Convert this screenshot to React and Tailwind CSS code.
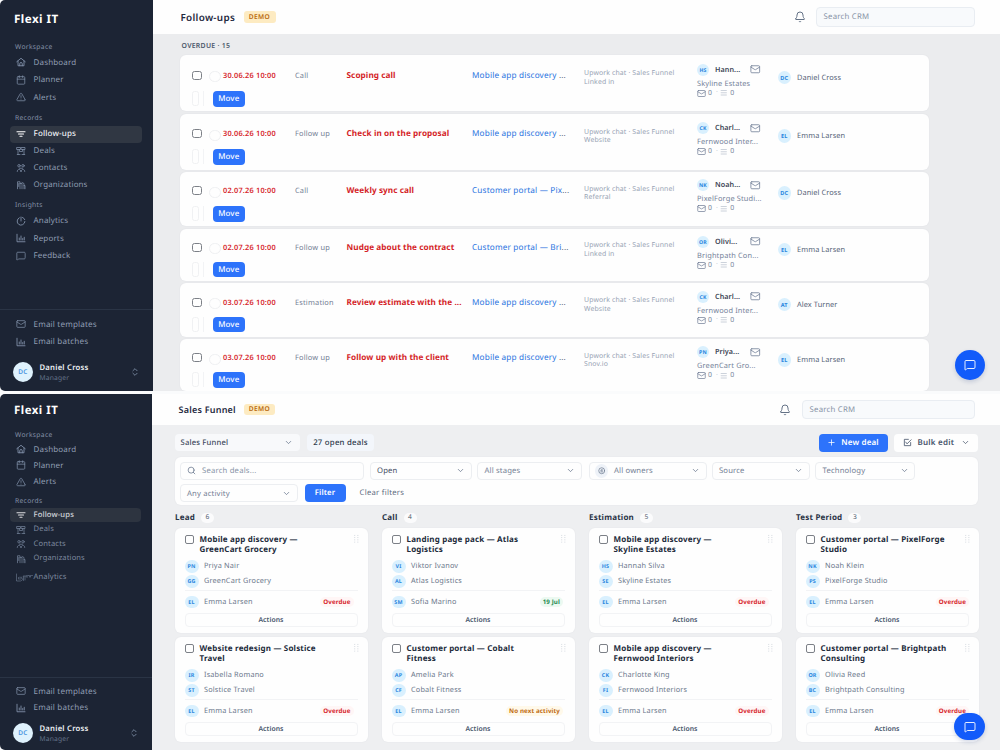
import {
    Bell, Calendar, ChevronDown, ChevronsUpDown, Mail, MessageSquare, Plus, Search, TriangleAlert,
} from "lucide-react";

const FONT = "font-['Noto_Sans','Open_Sans',sans-serif] [text-rendering:geometricPrecision] [&_button]:[text-rendering:inherit]";

function Svg({ className, children, box = "0 0 20 20", sw = 1.8 }) {
    return (
        <svg viewBox={box} className={className} fill="none" stroke="currentColor" strokeWidth={sw} strokeLinecap="round" strokeLinejoin="round">
            {children}
        </svg>
    );
}

const HomeIcon = ({ className }) => (
    <Svg className={className}><path d="M1.5 9.5 10 2.5l8.500 7M4 8v9.5h12V8M7.5 17.5v-4a2.5 2.5 0 0 1 5 0v4" /></Svg>
);
const FollowIcon = ({ className }) => (
    <Svg className={className} sw={2.4}><path d="M2 5.500h16M5 10h10M8 14.500h4" /></Svg>
);
const DealsIcon = ({ className }) => (
    <Svg className={className} sw={1.5}><path d="M2 3h7v4H2zM11 3h7v4h-7zM4 7v10M2.500 17h5.500M7 7v4h6V7M16 7v10M12 17h5.500" /></Svg>
);
const ContactsIcon = ({ className }) => (
    <Svg className={className} sw={1.5}><circle cx="6" cy="5.5" r="2.5" /><circle cx="14" cy="5.5" r="2.5" /><path d="M2.5 17c0-6 7-6 7 0M10.500 17c0-6 7-6 7 0M7 10.500h6" /></Svg>
);
const OrgIcon = ({ className }) => (
    <Svg className={className} sw={1.5}><path d="M3 17.500V3.500h5v14M8 7h4v10.500M12 5l4 2v10.500M5.500 7v6M16 11h2v6.500" /></Svg>
);
const PieIcon = ({ className }) => (
    <Svg className={className}><path d="M6.500 3.500a7.800 7.800 0 1 0 11.300 7.500M10 10V2M13 2.800a8 8 0 0 1 4.500 4.500" /></Svg>
);
const ReportIcon = ({ className }) => (
    <Svg className={className}><path d="M2 2.500v15h16M6.500 14v-4M10 14V6M13.500 14v-3M16.500 14V8.500" /></Svg>
);
// chart with the collapsed group label running out of its right side
const CollapsedIcon = () => (
    <Svg className="h-[9px] w-[17px] shrink-0" box="0 0 34 18" sw={1.2}>
        <path d="M1 2v14h8M5 12v-3M8 13V8M12 8c-3 0-2 3 0 3s2 4-1 4M15 15V7M18 7v7M15 6h7M22 5v4M24 5h3v3M29 5v3M31 5h2" />
    </Svg>
);

function NavItem({ icon: Icon, label, active, rowClass, textClass = "text-[8px]" }) {
    return (
        <div className={`ml-[9.500px] mr-[11.500px] flex items-center rounded-[4px] pl-[6px] ${rowClass} ${active ? "bg-[#303743] text-[#eef1f5]" : "text-[#8f9db2]"}`}>
            <span className="flex w-[18px] shrink-0 items-center text-[#8090a8]">
                <Icon className={`size-[10px] ${active ? "text-white" : ""}`} strokeWidth={1.8} />
            </span>
            <span className={`pt-[1.200px] tracking-[0.02em] ${textClass} ${active ? "font-medium" : ""}`}>{label}</span>
        </div>
    );
}

const SectionLabel = ({ children, className }) => (
    <div className={`flex h-3 items-center pl-[15px] pt-[1px] text-[6.700px] tracking-[0.050em] text-[#8592a8] ${className}`}>{children}</div>
);

function SidebarFooter({ rowClass, className, userClass }) {
    return (
        <div className={`mt-auto border-t border-[#2a3445] ${className}`}>
            <NavItem icon={Mail} label="Email templates" rowClass={rowClass} textClass="text-[8.100px]" />
            <NavItem icon={ReportIcon} label="Email batches" rowClass={rowClass} textClass="text-[8.100px]" />
            <div className={`flex items-center pl-[13px] pr-[13px] ${userClass}`}>
                <div className="flex size-5 items-center justify-center rounded-full bg-[#dff2fd] text-[6.500px] font-semibold tracking-[0.040em] text-[#4a94e0]">DC</div>
                <div className="ml-[6.500px] flex-1 pt-[2px]">
                    <div className="text-[7.700px] font-semibold leading-[10px] tracking-[0.030em] text-[#eef1f5]">Daniel Cross</div>
                    <div className="text-[6.700px] leading-[10px] tracking-[0.030em] text-[#66748b]">Manager</div>
                </div>
                <ChevronsUpDown className="size-[10px] text-[#8090a8]" />
            </div>
        </div>
    );
}

function Initials({ children, className }) {
    return (
        <span className={`flex shrink-0 items-center justify-center rounded-full bg-[#d9f0fe] font-bold tracking-[0.030em] text-[#2a86df] ${className}`}>{children}</span>
    );
}

function TopBar({ title, titleClass, className, searchClass, badgeClass }) {
    return (
        <header className={`flex shrink-0 items-center bg-[#fefefe] ${className}`}>
            <h1 className={`whitespace-nowrap font-semibold text-[#1f2940] ${titleClass}`}>{title}</h1>
            <span className={`flex items-center justify-center rounded-[3px] bg-[#fdebc2] text-[6.600px] font-semibold tracking-[0.060em] text-[#b8690f] ${badgeClass}`}>DEMO</span>
            <Bell className="ml-auto size-3 text-[#5c6a80]" strokeWidth={1.900} />
            <div className={`flex items-center rounded-[4px] border border-[#e9edf2] bg-[#f8fafc] pl-[7px] pt-[1px] text-[7.800px] tracking-[0.030em] text-[#8793a6] ${searchClass}`}>Search CRM</div>
        </header>
    );
}

const followUps = [
    { date: "30.06.26 10:00", type: "Call", title: "Scoping call", deal: "Mobile app discovery", source: "Linked in", ini: "HS", name: "Hann...", org: "Skyline Estates", own: "DC", owner: "Daniel Cross", card: "h-[56px] pt-[14px]", gap: "mt-[10px]" },
    { date: "30.06.26 10:00", type: "Follow up", title: "Check in on the proposal", deal: "Mobile app discovery", source: "Website", ini: "CK", name: "Charl...", org: "Fernwood Inter...", own: "EL", owner: "Emma Larsen", card: "mt-[3px] h-[55.5px] pt-[13.500px]", gap: "mt-[9.5px]" },
    { date: "02.07.26 10:00", type: "Call", title: "Weekly sync call", deal: "Customer portal — Pix", source: "Referral", ini: "NK", name: "Noah...", org: "PixelForge Studi...", own: "DC", owner: "Daniel Cross", card: "mt-[2.5px] h-[54px] pt-[12.500px]", gap: "mt-[9.5px]" },
    { date: "02.07.26 10:00", type: "Follow up", title: "Nudge about the contract", deal: "Customer portal — Bri", source: "Linked in", ini: "OR", name: "Olivi...", org: "Brightpath Con...", own: "EL", owner: "Emma Larsen", card: "mt-[3px] h-[51.5px] pt-[12px]", gap: "mt-[8.500px]" },
    { date: "03.07.26 10:00", type: "Estimation", title: "Review estimate with the ...", deal: "Mobile app discovery", source: "Website", ini: "CK", name: "Charl...", org: "Fernwood Inter...", own: "AT", owner: "Alex Turner", card: "mt-[2.5px] h-[53.5px] pt-[13px]", gap: "mt-[8.500px]" },
    { date: "03.07.26 10:00", type: "Follow up", title: "Follow up with the client", deal: "Mobile app discovery", source: "Snov.io", ini: "PN", name: "Priya...", org: "GreenCart Gro...", own: "EL", owner: "Emma Larsen", card: "mt-[2.500px] h-[51.500px] pt-[12.500px]", gap: "mt-[8.5px]" },
];

function FollowUpCard({ item }) {
    return (
        <div className={`flex w-[749px] items-start rounded-[6px] bg-[#fefefe] pl-3 leading-[12px] whitespace-nowrap shadow-[0_0_2px_rgba(30,40,60,0.06)] ${item.card}`}>
            <div className="w-[103px] shrink-0">
                <div className="flex h-3 items-center">
                    <span className="h-[9px] w-[10px] rounded-[2.500px] border border-[#7c8087]" />
                    <span className="ml-[6.500px] mt-[3px] h-[11px] w-[12px] rounded-full border border-[#eff0f2]" />
                    <span className="ml-[2.500px] pt-[1.500px] text-[7.400px] font-semibold tracking-[0.025em] text-[#d6252c]">{item.date}</span>
                </div>
                <div className={`flex h-[15.500px] items-center ${item.gap}`}>
                    <span className="h-[15px] w-[7px] rounded-[2.500px] border border-[#f0f1f3]" />
                    <span className="ml-[4px] h-[15px] w-px bg-[#f2f3f5]" />
                    <span className="ml-[8.500px] flex h-full w-[32.500px] items-center justify-center rounded-[4px] bg-[#2d73fb] pt-[1px] text-[7.900px] font-medium tracking-[0.020em] text-white">Move</span>
                </div>
            </div>
            <div className="w-[51.500px] shrink-0 pt-[0.700px] text-[7.400px] tracking-[0.025em] text-[#748095]">{item.type}</div>
            <div className="w-[125.500px] shrink-0 pt-[0.700px] text-[8.200px] font-bold tracking-[0.010em] text-[#d41f28]">{item.title}</div>
            <div className="w-[112px] shrink-0 pt-[0.700px] text-[8.200px] tracking-[0.020em] text-[#2872e0]">
                {item.deal}{item.deal.startsWith("Mobile") ? " " : ""}<span className="text-[#46546b]">...</span>
            </div>
            <div className="w-[113px] shrink-0 pt-[1.300px] text-[6.900px] leading-[8.500px] tracking-[0.020em] text-[#98a3b4]">
                Upwork chat · Sales Funnel<br />{item.source}
            </div>
            <div className="-mt-[5.500px] w-[80.500px] shrink-0">
                <div className="flex h-3 items-center">
                    <Initials className="size-3 text-[5.200px]">{item.ini}</Initials>
                    <span className="ml-[6px] w-[35px] text-[7.200px] font-semibold tracking-[0.010em] text-[#3d4656]">{item.name}</span>
                    <Mail className="size-[10.500px] text-[#75829a]" strokeWidth={1.900} />
                </div>
                <div className="mt-[2.500px] pt-[0.500px] text-[7.400px] leading-[10px] tracking-[0.020em] text-[#75829a]">{item.org}</div>
                <div className="-mt-[0.500px] flex h-[10px] items-center text-[6.900px] text-[#75829a]">
                    <Mail className="size-[9px]" />
                    <span className="ml-[2px] pt-[1px]">0</span>
                    <span className="ml-[4px] text-[#c3cad4]">·</span>
                    <Svg className="ml-[2px] size-[7.500px] text-[#b3bcc9]"><path d="M3 4h14M3 10h14M3 16h14" /></Svg>
                    <span className="ml-[3px] pt-[1px]">0</span>
                </div>
            </div>
            <div className="mt-[2px] flex h-[13px] items-center">
                <Initials className="size-[13.500px] text-[5.600px]">{item.own}</Initials>
                <span className="ml-[6px] pt-[0.500px] text-[7.400px] tracking-[0.010em] text-[#566378]">{item.owner}</span>
            </div>
        </div>
    );
}

function ChatButton({ className }) {
    return (
        <button className={`absolute flex items-center justify-center rounded-full bg-[#125bfa] text-white shadow-[0_2px_4px_rgba(20,50,120,0.18)] ${className}`}>
            <MessageSquare className="size-3" strokeWidth={1.800} />
        </button>
    );
}

function FollowUpsScreen() {
    return (
        <section className="relative flex h-[390.500px] overflow-hidden">
            <aside className="flex w-[153px] shrink-0 flex-col rounded-l-[5px] bg-[#1c2434]">
                <div className="flex h-[37.500px] items-center pl-[14px] pt-[1.500px] text-[11.600px] font-bold tracking-[0.040em] text-white">Flexi IT</div>
                <SectionLabel className="mt-[3px]">Workspace</SectionLabel>
                <div className="mt-[1px]">
                    <NavItem icon={HomeIcon} label="Dashboard" rowClass="h-[17.500px]" />
                    <NavItem icon={Calendar} label="Planner" rowClass="h-[17.500px]" />
                    <NavItem icon={TriangleAlert} label="Alerts" rowClass="h-[17.500px]" />
                </div>
                <SectionLabel className="mt-[6px]">Records</SectionLabel>
                <div className="mt-[1.500px]">
                    <NavItem icon={FollowIcon} label="Follow-ups" active rowClass="h-[17px]" />
                    <NavItem icon={DealsIcon} label="Deals" rowClass="h-[17px]" />
                    <NavItem icon={ContactsIcon} label="Contacts" rowClass="h-[17px]" />
                    <NavItem icon={OrgIcon} label="Organizations" rowClass="h-[17px]" textClass="text-[7.900px]" />
                </div>
                <SectionLabel className="mt-[5.500px]">Insights</SectionLabel>
                <div className="mt-[1px]">
                    <NavItem icon={PieIcon} label="Analytics" rowClass="h-[17.500px]" />
                    <NavItem icon={ReportIcon} label="Reports" rowClass="h-[17.500px]" />
                    <NavItem icon={MessageSquare} label="Feedback" rowClass="h-[17.500px]" />
                </div>
                <SidebarFooter className="h-[81.500px] pt-[5.500px]" rowClass="h-[17.500px]" userClass="mt-[10.500px]" />
            </aside>
            <main className="flex min-w-0 flex-1 flex-col bg-[#ebecee]">
                <TopBar title="Follow-ups" className="h-[34px] pl-[27.500px] pr-[25.500px]" titleClass="w-[55px] text-[9.900px] tracking-[0.030em]" badgeClass="ml-[8px] h-3 w-8" searchClass="ml-[10px] h-5 w-[159px]" />
                <div className="pl-[27px]">
                    <div className="flex h-[21px] items-center pl-[1.500px] pt-[6px] text-[6.900px] font-semibold tracking-[0.040em] text-[#4d596c]">OVERDUE · 15</div>
                    {followUps.map((item, i) => <FollowUpCard key={i} item={item} />)}
                </div>
            </main>
            <ChatButton className="left-[954.500px] top-[349.500px] size-[30.500px]" />
        </section>
    );
}

function Select({ label, className, icon, dark }) {
    return (
        <div className={`flex items-center rounded-[4px] border text-[7.700px] tracking-[0.020em] ${dark ? "text-[#3f4b5e]" : "text-[#748095]"} ${className}`}>
            {icon}
            <span className="flex-1 pt-[1px]">{label}</span>
            <ChevronDown className="size-[9px] text-[#66748b]" />
        </div>
    );
}

const columns = [
    {
        name: "Lead", count: 6, width: "w-[193px]", badge: "mr-[4px]",
        deals: [
            { title: ["Mobile app discovery —", "GreenCart Grocery"], a: "PN", person: "Priya Nair", b: "GG", org: "GreenCart Grocery", o: "EL", owner: "Emma Larsen", status: "Overdue" },
            { title: ["Website redesign — Solstice", "Travel"], a: "IR", person: "Isabella Romano", b: "ST", org: "Solstice Travel", o: "EL", owner: "Emma Larsen", status: "Overdue" },
        ],
    },
    {
        name: "Call", count: 4, width: "w-[193px]", badge: "mr-[1.500px]",
        deals: [
            { title: ["Landing page pack — Atlas", "Logistics"], a: "VI", person: "Viktor Ivanov", b: "AL", org: "Atlas Logistics", o: "SM", owner: "Sofia Marino", status: "19 Jul" },
            { title: ["Customer portal — Cobalt", "Fitness"], a: "AP", person: "Amelia Park", b: "CF", org: "Cobalt Fitness", o: "EL", owner: "Emma Larsen", status: "No next activity" },
        ],
    },
    {
        name: "Estimation", count: 5, width: "w-[193px]", badge: "mr-[3px]",
        deals: [
            { title: ["Mobile app discovery —", "Skyline Estates"], a: "HS", person: "Hannah Silva", b: "SE", org: "Skyline Estates", o: "EL", owner: "Emma Larsen", status: "Overdue" },
            { title: ["Mobile app discovery —", "Fernwood Interiors"], a: "CK", person: "Charlotte King", b: "FI", org: "Fernwood Interiors", o: "EL", owner: "Emma Larsen", status: "Overdue" },
        ],
    },
    {
        name: "Test Period", count: 3, width: "w-[183px]", badge: "-mr-[0.500px]",
        deals: [
            { title: ["Customer portal — PixelForge", "Studio"], a: "NK", person: "Noah Klein", b: "PS", org: "PixelForge Studio", o: "EL", owner: "Emma Larsen", status: "Overdue" },
            { title: ["Customer portal — Brightpath", "Consulting"], a: "OR", person: "Olivia Reed", b: "BC", org: "Brightpath Consulting", o: "EL", owner: "Emma Larsen", status: "Overdue" },
        ],
    },
];

const statusStyles = {
    "Overdue": "bg-[#fff6f6] text-[#d6252c]",
    "19 Jul": "bg-[#ecf9f1] text-[#1d8a50]",
    "No next activity": "bg-[#fff9ea] text-[#c06a10]",
};

function Person({ initials, name, className }) {
    return (
        <div className={`flex items-center ${className}`}>
            <Initials className="h-[12.500px] w-[14px] text-[5.400px]">{initials}</Initials>
            <span className="ml-[5.500px] pt-[1px] text-[7.300px] tracking-[0.025em] text-[#6b778b]">{name}</span>
        </div>
    );
}

function DealCard({ deal, badge }) {
    return (
        <div className="flex h-[105px] flex-col rounded-[6px] bg-[#fefefe] px-[10px] whitespace-nowrap shadow-[0_0_2px_rgba(30,40,60,0.06)]">
            <div className="flex items-start pt-[6px]">
                <span className="mt-[0.500px] h-[9px] w-[9.500px] rounded-[2px] border border-[#7c8087]" />
                <div className="ml-[5.500px] flex-1 pt-[0.700px] text-[8px] font-bold leading-[10.300px] tracking-[0.022em] text-[#222b3b]">
                    {deal.title[0]}<br />{deal.title[1]}
                </div>
                <Svg className="-mr-[3px] size-[9px] text-[#c4cad3]" sw={1.8}>
                    <path d="M6 3v.1M13 3v.1M6 8v.1M13 8v.1M6 13v.1M13 13v.1M6 18v.1M13 18v.1" />
                </Svg>
            </div>
            <Person initials={deal.a} name={deal.person} className="mt-[3.800px] h-[15px]" />
            <Person initials={deal.b} name={deal.org} className="h-[15px]" />
            <div className="mt-[1px] flex items-center border-t border-[#f2f3f5] pt-[4px]">
                <Person initials={deal.o} name={deal.owner} className="h-[14px]" />
                <span className={`ml-auto rounded-[5px] px-[3px] text-[6.200px] font-bold leading-[10px] tracking-[0.020em] ${badge} ${statusStyles[deal.status]}`}>{deal.status}</span>
            </div>
            <div className="mt-[4px] flex h-[14px] items-center justify-center rounded-[4px] border border-[#f2f3f5] text-[6.800px] font-semibold tracking-[0.010em] text-[#46546b]">Actions</div>
        </div>
    );
}

function FunnelScreen() {
    return (
        <section className="relative flex h-[356px] overflow-hidden">
            <aside className="flex w-[152px] shrink-0 flex-col rounded-l-[5px] bg-[#1c2434]">
                <div className="flex h-[33px] items-center pl-[14px] pt-[1px] text-[11.400px] font-bold tracking-[0.045em] text-white">Flexi IT</div>
                <SectionLabel className="mt-[1.500px]">Workspace</SectionLabel>
                <div className="mt-[0.500px]">
                    <NavItem icon={HomeIcon} label="Dashboard" rowClass="h-[16.300px]" />
                    <NavItem icon={Calendar} label="Planner" rowClass="h-[16.300px]" />
                    <NavItem icon={TriangleAlert} label="Alerts" rowClass="h-[16.300px]" />
                </div>
                <SectionLabel className="mt-[5px]">Records</SectionLabel>
                <div className="mt-[1px] opacity-85">
                    <NavItem icon={FollowIcon} label="Follow-ups" active rowClass="h-[14.500px]" textClass="text-[7.600px]" />
                    <NavItem icon={DealsIcon} label="Deals" rowClass="h-[14.500px]" textClass="text-[7.600px]" />
                    <NavItem icon={ContactsIcon} label="Contacts" rowClass="h-[14.500px]" textClass="text-[7.600px]" />
                    <NavItem icon={OrgIcon} label="Organizations" rowClass="h-[14.500px]" textClass="text-[7.500px]" />
                    <NavItem icon={CollapsedIcon} label="Analytics" rowClass="mt-[4px] h-[14.500px]" textClass="text-[7.600px]" />
                </div>
                <SidebarFooter className="h-[73px] pt-[5px]" rowClass="h-[16.500px]" userClass="mt-[6px]" />
            </aside>
            <main className="flex min-w-0 flex-1 flex-col bg-[#eeeff1]">
                <TopBar title="Sales Funnel" className="h-[31px] pl-[26.500px] pr-[25.500px]" titleClass="w-[57.500px] text-[9px] tracking-[0.025em]" badgeClass="ml-[8px] h-[11.500px] w-[31px]" searchClass="ml-[11px] h-[18.500px] w-[173px]" />
                <div className="flex flex-1 flex-col pl-[22.500px] pt-[9px]">
                    <div className="flex w-[803px] items-center">
                        <Select label="Sales Funnel" dark className="h-[17px] w-[125.500px] border-transparent bg-[#f8f9fb] pl-[5px] pr-[6px] font-medium" />
                        <span className="ml-[7px] flex h-[17px] w-[67px] items-center justify-center rounded-[4px] bg-[#f3f6fb] pt-[1px] text-[7.800px] font-medium tracking-[0.030em] text-[#2e394b]">27 open deals</span>
                        <button className="ml-auto flex h-[17.500px] w-[69px] items-center justify-center gap-[5px] rounded-[4px] bg-[#2d73fb] text-[8px] font-semibold tracking-[0.020em] text-white">
                            <Plus className="size-[9px]" />New deal
                        </button>
                        <button className="ml-[6.500px] flex h-[17.500px] w-[83.500px] items-center rounded-[4px] bg-[#fefefe] pl-[9px] pr-[8px] text-[8px] font-semibold tracking-[0.030em] text-[#46546b]">
                            <Svg className="mr-[5.500px] size-[9px]"><path d="M12 3H3v14h14v-7M6 9l3 4 9-9" /></Svg>
                            <span className="flex-1 text-left">Bulk edit</span>
                            <ChevronDown className="size-[9px]" />
                        </button>
                    </div>
                    <div className="mt-[5.500px] flex h-[48px] w-[803.500px] flex-col gap-[4px] rounded-[6px] bg-[#fefefe] pl-[5.500px] pt-[4.500px] shadow-[0_0_2px_rgba(30,40,60,0.06)]">
                        <div className="flex h-[18.500px]">
                            <div className="flex w-[184px] items-center rounded-[4px] border border-[#eceef1] pl-[6px] text-[7.700px] tracking-[0.025em] text-[#8793a6]">
                                <Search className="mr-[6px] size-[9px] text-[#66748b]" />
                                <span className="pt-[1px]">Search deals...</span>
                            </div>
                            <Select label="Open" dark className="ml-[6px] w-[101.500px] border-[#eceef1] pl-[6px] pr-[6px]" />
                            <Select label="All stages" className="ml-[5.500px] w-[105px] border-[#eceef1] pl-[6.500px] pr-[6px]" />
                            <Select
                                label="All owners"
                                className="ml-[6.500px] w-[118px] border-[#eceef1] pl-[5px] pr-[6px]"
                                icon={
                                    <span className="mr-[6px] flex size-[13.500px] items-center justify-center rounded-full bg-[#eef2f8] text-[#66748b]">
                                        <Svg className="size-[7.500px]"><circle cx="10" cy="10" r="8" /><path d="M7 8.500c1-1.500 5-1.500 6 0M7.500 13h5M10 8v2.500" /></Svg>
                                    </span>
                                }
                            />
                            <Select label="Source" className="ml-[5.500px] w-[97.500px] border-[#eceef1] pl-[6px] pr-[6px]" />
                            <Select label="Technology" className="ml-[5.500px] w-[100px] border-[#eceef1] pl-[6.500px] pr-[5px]" />
                        </div>
                        <div className="flex h-[18px] text-[7.700px] tracking-[0.020em]">
                            <Select label="Any activity" className="w-[118px] border-[#eceef1] pl-[6px] pr-[6px]" />
                            <button className="ml-[6.500px] w-[41px] rounded-[4px] bg-[#2d73fb] font-semibold text-white">Filter</button>
                            <button className="ml-[14px] tracking-[0.035em] text-[#5e6b80]">Clear filters</button>
                        </div>
                    </div>
                    <div className="mt-[6px] flex gap-[14px]">
                        {columns.map(col => (
                            <div key={col.name} className={`shrink-0 ${col.width}`}>
                                <div className="flex h-[13px] items-center pl-[0.500px]">
                                    <h2 className="pt-[1px] text-[8px] font-bold tracking-[0.025em] text-[#2a3446]">{col.name}</h2>
                                    <span className="ml-[6px] flex h-[10px] w-[13px] items-center justify-center rounded-[5px] bg-[#fbfbfc] text-[6.700px] text-[#4d596c]">{col.count}</span>
                                </div>
                                <div className="mt-[4px] flex flex-col gap-[4px]">
                                    {col.deals.map((deal, i) => <DealCard key={i} deal={deal} badge={col.badge} />)}
                                </div>
                            </div>
                        ))}
                    </div>
                </div>
            </main>
            <ChatButton className="left-[954px] top-[319px] h-[27px] w-[31px]" />
        </section>
    );
}

export default function App() {
    return (
        <div className={`flex h-[750px] w-[1000px] flex-col justify-between overflow-hidden bg-[#fafbfc] leading-[1.300] ${FONT}`}>
            <FollowUpsScreen />
            <FunnelScreen />
        </div>
    );
}
